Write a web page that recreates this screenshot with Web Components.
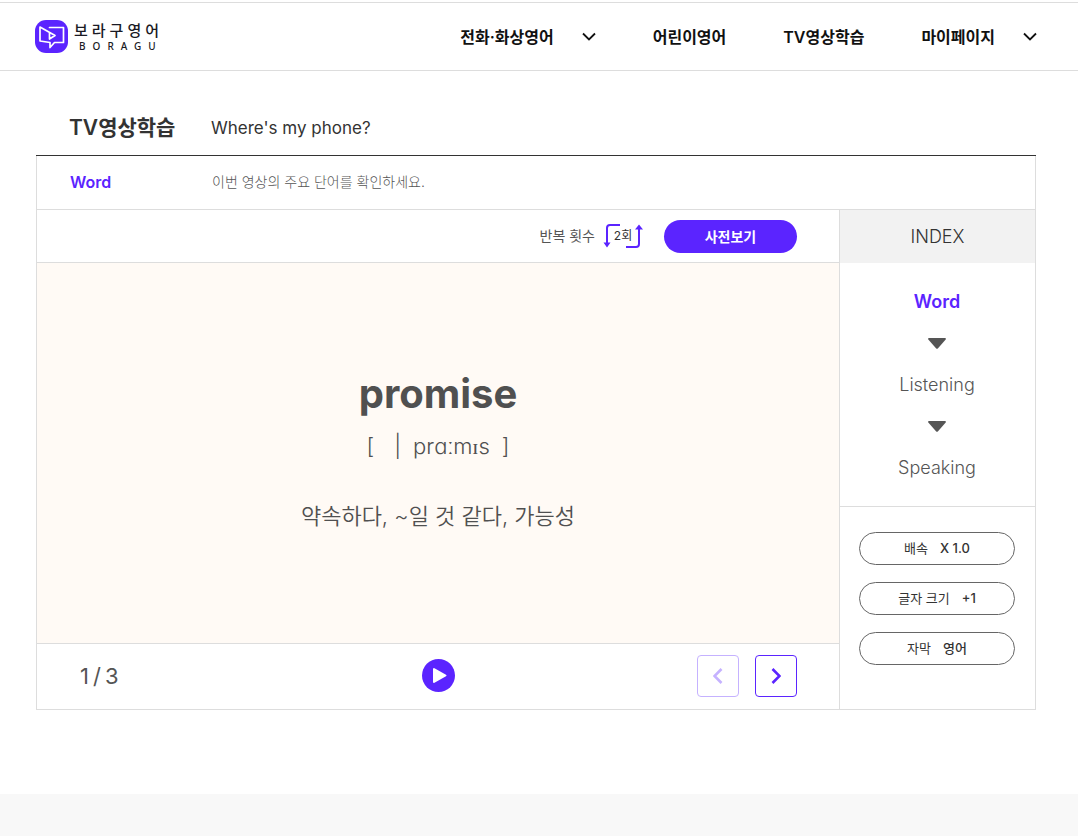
<!DOCTYPE html>
<html lang="ko">
<head>
<meta charset="utf-8">
<meta name="viewport" content="width=device-width, initial-scale=1">
<title>보라구영어 - TV영상학습</title>
<style>
  :root {
    --brand: #5b24ff;
    --line: #dddddd;
    --ink: #333333;
    --soft: #555555;
  }
  body {
    margin: 0;
    background: #fff;
    color: var(--ink);
    font-family: Inter, "Noto Sans CJK KR", sans-serif;
    font-size: 16px;
  }
</style>
</head>
<body>
<boragu-page></boragu-page>

<script>
const define = (name, html) => {
  const template = document.createElement('template');
  template.innerHTML = '<style>*{box-sizing:border-box}button{font:inherit;color:inherit;margin:0;padding:0;cursor:pointer}a{color:inherit;text-decoration:none}svg{display:block}</style>' + html;
  customElements.define(name, class extends HTMLElement {
    constructor() {
      super();
      this.attachShadow({ mode: 'open' }).append(template.content.cloneNode(true));
    }
  });
};

define('boragu-logo', `
  <style>
    :host { display: block; }
    a { display: flex; align-items: center; gap: 6px; color: #1a1a24; }
    .name { display: flex; flex-direction: column; font-family: "Noto Sans CJK KR", sans-serif; }
    .ko { font-size: 15px; line-height: 18px; font-weight: 500; letter-spacing: 4px; }
    .en { font-family: "Noto Sans", sans-serif; font-size: 10px; line-height: 14px; font-weight: 500; letter-spacing: 7px; padding-left: 5px; }
  </style>
  <a href="#">
    <svg width="33" height="33" viewBox="0 0 33 33" aria-hidden="true">
      <rect width="33" height="33" rx="11" fill="#5b24ff"/>
      <path d="M14.500 7.500H28.500V22.500H19.500L15 27.500V22.500L5 21V7L20 15.500L14.500 19V12.500" fill="none" stroke="#fff" stroke-width="1.7" stroke-linejoin="round" stroke-linecap="round"/>
    </svg>
    <span class="name"><span class="ko">보라구영어</span><span class="en">BORAGU</span></span>
  </a>`);

define('nav-item', `
  <style>
    :host { display: block; }
    a { display: flex; align-items: center; gap: 28px; font-weight: 600; line-height: 24px; color: #111; white-space: nowrap; }
    svg { display: none; }
    :host([menu]) svg { display: block; }
  </style>
  <a href="#"><slot></slot><svg width="14" height="9" viewBox="0 0 14 9" fill="none" stroke="#111" stroke-width="1.8" aria-hidden="true"><path d="M1 1.500L7 7.500L13 1.500"/></svg></a>`);

define('site-header', `
  <style>
    :host { display: block; padding-top: 2px; }
    header { display: flex; align-items: center; justify-content: space-between; height: 69px; padding: 0 41px 0 35px; border: 1px solid var(--line); border-width: 1px 0; }
    nav { display: flex; gap: 57px; }
  </style>
  <header>
    <boragu-logo></boragu-logo>
    <nav>
      <nav-item menu>전화·화상영어</nav-item>
      <nav-item>어린이영어</nav-item>
      <nav-item>TV영상학습</nav-item>
      <nav-item menu>마이페이지</nav-item>
    </nav>
  </header>`);

define('lesson-heading', `
  <style>
    :host { display: block; }
    .title, .step { display: grid; grid-template-columns: 142px 1fr; align-items: center; }
    .title { height: 56px; padding-left: 33px; border-bottom: 1px solid #333; }
    h1 { margin: 0; font-size: 21px; line-height: 28px; font-weight: 600; }
    p { margin: 0; }
    .title p { font-size: 17px; line-height: 28px; }
    .step { height: 54px; padding: 0 0 2px 33px; border: 1px solid var(--line); border-top: 0; }
    h2 { margin: 0; font-size: 16px; line-height: 24px; font-weight: 600; color: var(--brand); }
    .step p { font-size: 14px; line-height: 24px; font-weight: 300; color: var(--soft); }
  </style>
  <div class="title"><h1>TV영상학습</h1><p>Where's my phone?</p></div>
  <div class="step"><h2>Word</h2><p>이번 영상의 주요 단어를 확인하세요.</p></div>`);

define('repeat-count', `
  <style>
    :host { display: flex; align-items: center; gap: 8px; font-size: 14px; line-height: 20px; color: var(--soft); }
    button { display: grid; place-items: center; border: 0; background: none; font-size: 12px; line-height: 16px; color: #333; }
    button > * { grid-area: 1 / 1; }
  </style>
  <span id="label">반복 횟수</span>
  <button type="button" aria-describedby="label">
    <svg width="40" height="24" viewBox="0 0 40 24" fill="none" stroke="#5b24ff" stroke-width="2" aria-hidden="true">
      <path d="M17 1H7Q4 1 4 4V20M23 23H33Q36 23 36 20V4"/>
      <path d="M.5 18.500H7.500L4 23.500ZM32 5.500H40L36 .5Z" fill="#5b24ff" stroke="none"/>
    </svg>
    <span>2회</span>
  </button>`);

define('word-player', `
  <style>
    :host { display: grid; grid-template-rows: 53px 1fr 66px; }
    .tools { display: flex; align-items: center; justify-content: flex-end; gap: 21px; padding-right: 42px; border-bottom: 1px solid var(--line); }
    .dict { width: 133px; height: 33px; border: 0; border-radius: 17px; background: var(--brand); color: #fff; font-size: 14px; font-weight: 700; }
    .stage { display: flex; flex-direction: column; align-items: center; justify-content: center; min-height: 380px; padding-bottom: 6px; background: #fffaf5; color: #505050; text-align: center; }
    .stage p { margin: 0; }
    .stage .word { font-size: 40px; line-height: 56px; font-weight: 700; }
    .stage .sound { display: flex; gap: 12px; font-size: 22px; line-height: 32px; font-weight: 300; margin-top: 8px; }
    .bar { margin-left: 8px; }
    .ipa { font-family: Inter, "Liberation Serif", serif; }
    .stage .meaning { font-size: 22px; line-height: 36px; font-weight: 350; margin-top: 36px; }
    .controls { display: grid; grid-template-columns: 1fr auto 1fr; align-items: center; padding: 0 42px 2px 42px; border-top: 1px solid var(--line); }
    .count { display: flex; gap: 4px; padding-left: 1px; font-size: 22px; line-height: 28px; color: var(--soft); }
    .play { border: 0; background: none; }
    .steps { display: flex; justify-content: flex-end; gap: 16px; }
    .steps button { display: grid; place-items: center; width: 42px; height: 42px; border: 1px solid var(--brand); border-radius: 4px; background: #fff; }
    .steps button:disabled { opacity: .35; cursor: default; }
  </style>
  <div class="tools"><repeat-count></repeat-count><button class="dict" type="button">사전보기</button></div>
  <div class="stage">
    <p class="word">promise</p>
    <p class="sound"><span>[</span><span class="bar">|</span><span class="ipa">prɑːmɪs</span><span>]</span></p>
    <p class="meaning">약속하다, ~일 것 같다, 가능성</p>
  </div>
  <div class="controls">
    <span class="count"><span>1</span><span>/</span><span>3</span></span>
    <button class="play" type="button" aria-label="재생">
      <svg width="33" height="33" viewBox="0 0 33 33"><circle cx="16.500" cy="16.500" r="16.500" fill="#5b24ff"/><path d="M12 10V23L23.500 16.500Z" fill="#fff" stroke="#fff" stroke-width="2" stroke-linejoin="round"/></svg>
    </button>
    <div class="steps">
      <button type="button" aria-label="이전" disabled><svg width="10" height="16" viewBox="0 0 10 16" fill="none" stroke="#5b24ff" stroke-width="2.600"><path d="M8.500 1L1.500 8L8.500 15"/></svg></button>
      <button type="button" aria-label="다음"><svg width="10" height="16" viewBox="0 0 10 16" fill="none" stroke="#5b24ff" stroke-width="2.600"><path d="M1.500 1L8.500 8L1.500 15"/></svg></button>
    </div>
  </div>`);

define('option-button', `
  <style>
    :host { display: block; }
    button { display: flex; align-items: center; justify-content: center; gap: 12px; width: 100%; height: 33px; padding-bottom: 2px; border: 1px solid #666; border-radius: 17px; background: #fff; font-size: 13px; line-height: 20px; color: #333; }
    b { font-weight: 500; }
  </style>
  <button type="button"><span><slot></slot></span><b><slot name="value"></slot></b></button>`);

define('lesson-index', `
  <style>
    :host { display: block; border-left: 1px solid var(--line); }
    h2 { margin: 0; height: 53px; background: #f2f2f2; font-size: 18px; line-height: 54px; font-weight: 300; text-align: center; }
    nav { display: flex; flex-direction: column; align-items: center; gap: 24px; padding: 27px 1px 26px 0; border-bottom: 1px solid var(--line); font-size: 18px; line-height: 24px; font-weight: 300; color: var(--soft); }
    a[aria-current] { color: var(--brand); font-weight: 600; }
    .options { display: flex; flex-direction: column; gap: 17px; padding: 25px 20px 44px 19px; }
  </style>
  <h2>INDEX</h2>
  <nav>
    <a href="#" aria-current="step">Word</a>
    <svg width="18" height="11" viewBox="0 0 18 11" fill="#555" aria-hidden="true"><path d="M1 0H17Q18.500 0 17.500 1.800L10 10.300Q9 11.300 8 10.300L.5 1.800Q-.5 0 1 0Z"/></svg>
    <a href="#">Listening</a>
    <svg width="18" height="11" viewBox="0 0 18 11" fill="#555" aria-hidden="true"><path d="M1 0H17Q18.500 0 17.500 1.800L10 10.300Q9 11.300 8 10.300L.5 1.800Q-.5 0 1 0Z"/></svg>
    <a href="#">Speaking</a>
  </nav>
  <div class="options">
    <option-button>배속<span slot="value">X 1.0</span></option-button>
    <option-button>글자 크기<span slot="value">+1</span></option-button>
    <option-button>자막<span slot="value">영어</span></option-button>
  </div>`);

define('boragu-page', `
  <style>
    :host { display: flex; flex-direction: column; min-height: 100vh; }
    main { padding: 29px 42px 84px 36px; }
    .board { display: grid; grid-template-columns: 1fr 196px; border: 1px solid var(--line); border-top: 0; }
    footer { flex: 1; background: #f8f8f8; }
  </style>
  <site-header></site-header>
  <main>
    <lesson-heading></lesson-heading>
    <div class="board"><word-player></word-player><lesson-index></lesson-index></div>
  </main>
  <footer></footer>`);
</script>
</body>
</html>
